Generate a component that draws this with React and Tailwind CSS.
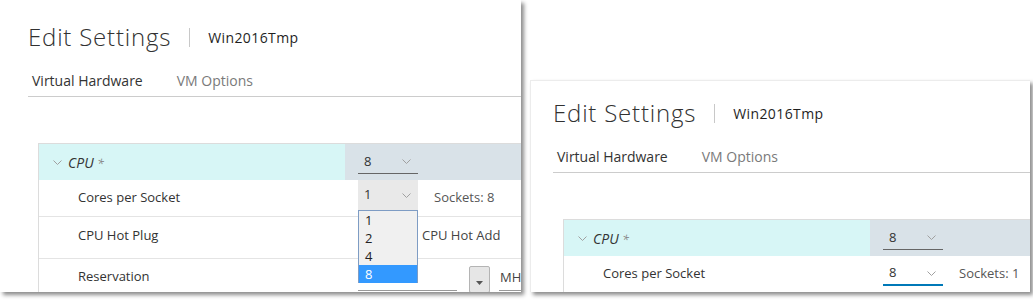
import React from "react";

const Chevron = () => (
  <svg width="9" height="5" viewBox="0 0 9 5" className="block">
    <polyline points="0.5,0.5 4.5,4.5 8.5,0.5" fill="none" stroke="#a0a0a0" strokeWidth="1" />
  </svg>
);

function Select({ value, variant }) {
  const base = "w-[60px] flex items-center justify-between pl-[6px] pr-[7px] text-[13px] text-[#333]";
  if (variant === "open") {
    return (
      <div className="relative self-start">
        <div className={base + " h-[30px] bg-[#e9e9e9]"}>
          <span>{value}</span>
          <Chevron />
        </div>
        <div className="absolute left-0 top-[30px] w-[60px] h-[73px] border border-[#7e9cc4] bg-[#f0f0f0] flex flex-col text-[13px] leading-[18px] text-[#222]">
          <div className="pl-[6px] h-[18px]">1</div>
          <div className="pl-[6px] h-[18px]">2</div>
          <div className="pl-[6px] h-[18px]">4</div>
          <div className="pl-[6px] h-[18px] bg-[#3399ff] text-white">8</div>
        </div>
      </div>
    );
  }
  if (variant === "blue") {
    return (
      <div className={base + " h-[23px] border-b-2 border-[#0079b8]"}>
        <span>{value}</span>
        <Chevron />
      </div>
    );
  }
  return (
    <div className={base + " h-[24px] border-b border-[#666]"}>
      <span>{value}</span>
      <Chevron />
    </div>
  );
}

function Panel({ offset, full }) {
  return (
    <div className={"flex flex-col " + offset} style={{ fontFamily: '"Open Sans", "Noto Sans", sans-serif' }}>
      <div className="flex items-center h-[32px] ml-[23px] mt-[17px]">
        <span className="text-[24px] font-light leading-[32px] text-[#313131] tracking-[0.8px]">Edit Settings</span>
        <span className="mx-[18px] w-px h-[19px] bg-[#c8c8c8]" />
        <span className="text-[14px] font-medium text-[#1f1f1f] tracking-[0.4px]">Win2016Tmp</span>
      </div>
      <div className="ml-[23px] h-[44px] border-b border-[#cccccc] flex items-end pb-[5px] pl-[4px] gap-[34px] text-[14px] leading-[20px]">
        <span className="text-[#333]">Virtual Hardware</span>
        <span className="text-[#7a7a7a]">VM Options</span>
      </div>
      <div className="ml-[33px] mt-[46px] border-l border-t border-[#dcdcdc] text-[13px] text-[#333]">
        <div className="flex h-[36px]">
          <div className="w-[306px] shrink-0 bg-[#d7f6f6] flex items-center pl-[14px]">
            <Chevron />
            <span className="ml-[6px] italic text-[14px] text-[#333]">
              CPU <span className="text-[#888] text-[12px]">*</span>
            </span>
          </div>
          <div className="flex-1 bg-[#d9e2e8] flex items-center pl-[13px]">
            <Select value="8" />
          </div>
        </div>
        <div className="flex h-[37px] border-b border-[#e4e4e4]">
          <div className="w-[306px] shrink-0 flex items-center pl-[39px]">Cores per Socket</div>
          <div className="flex-1 flex items-center pl-[13px]">
            <Select value={full ? "1" : "8"} variant={full ? "open" : "blue"} />
            <span className="ml-[16px] text-[#565656]">{full ? "Sockets: 8" : "Sockets: 1"}</span>
          </div>
        </div>
        {full && (
          <>
            <div className="flex h-[42px] border-b border-[#e4e4e4]">
              <div className="w-[306px] shrink-0 flex items-center pl-[39px] pb-[3px]">CPU Hot Plug</div>
              <div className="flex-1 flex items-center pl-[13px] pb-[3px]">
                <span className="ml-[46px] w-[13px] h-[13px] border border-[#999] rounded-[2px] bg-white" />
                <span className="ml-[5px] text-[#444]">CPU Hot Add</span>
              </div>
            </div>
            <div className="flex h-[36px]">
              <div className="w-[306px] shrink-0 flex items-center pl-[39px]">Reservation</div>
              <div className="flex-1 flex items-start pt-[7px] pl-[13px]">
                <div className="w-[99px] h-[25px] border-b border-[#999]" />
                <div className="ml-[12px] w-[21px] h-[27px] bg-[#e6e6e6] border border-[#b4b4b4] rounded-[2px] flex items-end justify-center pb-[7px]">
                  <svg width="7" height="4" viewBox="0 0 7 4" className="block">
                    <polygon points="0,0 7,0 3.5,4" fill="#555" />
                  </svg>
                </div>
                <div className="ml-[9px] w-[60px] h-[25px] border-b border-[#999] flex items-center pl-[1px] text-[#444]">MHz</div>
              </div>
            </div>
          </>
        )}
      </div>
    </div>
  );
}

export default function App() {
  return (
    <div className="relative w-[1033px] h-[302px] bg-white overflow-hidden">
      <div className="absolute left-0 top-0 w-[521px] h-[292px] bg-white overflow-hidden shadow-[3px_3px_4px_rgba(0,0,0,0.45)]">
        <Panel offset="pl-[5px] pt-[4px]" full />
      </div>
      <div className="absolute left-[530px] top-[80px] w-[500px] h-[212px] bg-white overflow-hidden border-l border-t border-[#ececec] shadow-[3px_3px_4px_rgba(0,0,0,0.45)]">
        <div className="-ml-px -mt-px">
          <Panel offset="" />
        </div>
      </div>
    </div>
  );
}
